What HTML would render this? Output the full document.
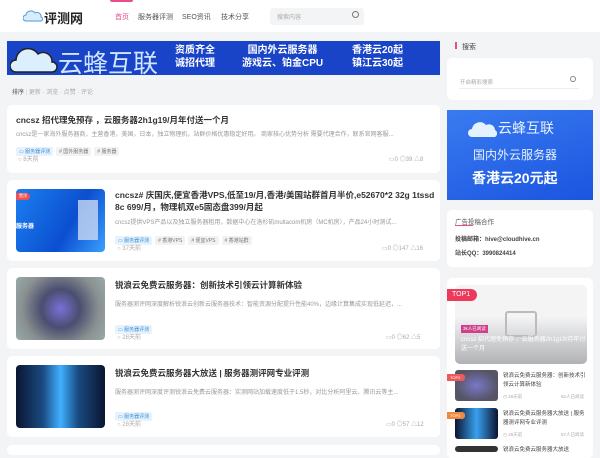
<!DOCTYPE html>
<html><head><meta charset="utf-8"><style>
*{margin:0;padding:0;box-sizing:border-box}
body{width:600px;height:450px;overflow:hidden;background:#f3f4f6;font-family:"Liberation Sans","Noto Sans CJK SC",sans-serif;color:#333;position:relative}
.a{position:absolute}
.hdr{left:0;top:0;width:600px;height:32px;background:#fff}
.card{background:#fff;border-radius:5px}
.t{font-size:8.5px;font-weight:bold;color:#333;white-space:nowrap}
.d{font-size:6px;color:#999;white-space:nowrap;overflow:hidden}
.tag{display:inline-block;font-size:5px;padding:1px 3px;background:#f2f2f2;color:#777;margin-right:3px;border-radius:2px}
.tag.b{background:#e6f2fc;color:#3a8fd6}
.m{font-size:6px;color:#aaa}
</style></head><body>
<div class="a hdr"></div>
<div class="a" style="left:110px;top:0;width:23px;height:2px;background:#e84e8a;border-radius:0 0 2px 2px"></div>
<svg class="a" style="left:23px;top:10px" width="20" height="12" viewBox="0 0 20 12"><path d="M3 11a3 3 0 0 1 0-6a5 5 0 0 1 9-2a4 4 0 0 1 6 4a2 2 0 0 1-1 4z" fill="#d8ecfa" stroke="#4a9be0" stroke-width="1"/></svg>
<div class="a" style="left:44px;top:8px;font-size:13px;font-weight:bold;color:#222">评测网</div>
<div class="a" style="left:115px;top:12px;font-size:7px;color:#e84e8a">首页</div>
<div class="a" style="left:138px;top:12px;font-size:7px;color:#555">服务器评测</div>
<div class="a" style="left:182px;top:12px;font-size:7px;color:#555">SEO资讯</div>
<div class="a" style="left:221px;top:12px;font-size:7px;color:#555">技术分享</div>
<div class="a" style="left:270px;top:8px;width:94px;height:17px;background:#f3f4f6;border-radius:3px"></div>
<div class="a" style="left:277px;top:12px;font-size:6px;color:#aaa">搜索内容</div>
<div class="a" style="left:352px;top:11px;width:7px;height:7px;border:1px solid #777;border-radius:50%"></div>

<div class="a" style="left:7px;top:41px;width:433px;height:34px;background:#1a44c8"></div>
<svg class="a" style="left:10px;top:44px" width="50" height="30" viewBox="0 0 50 30"><path d="M6 28a6 6 0 0 1 0-12a12 12 0 0 1 22-6a9 9 0 0 1 14 8a5 5 0 0 1 0 10z" fill="#dcefff" stroke="#222" stroke-width="1.5"/></svg>
<div class="a" style="left:58px;top:44px;font-size:25px;color:#cfe6ff;white-space:nowrap">云蜂互联</div>
<div class="a" style="left:175px;top:44px;font-size:10px;font-weight:bold;color:#fff;line-height:13px">资质齐全<br>诚招代理</div>
<div class="a" style="left:242px;top:44px;font-size:10px;font-weight:bold;color:#fff;line-height:13px;text-align:center">国内外云服务器<br>游戏云、铂金CPU</div>
<div class="a" style="left:352px;top:44px;font-size:10px;font-weight:bold;color:#fff;line-height:13px;text-align:right">香港云20起<br>镇江云30起</div>

<div class="a" style="left:12px;top:87px;font-size:6px;color:#555">排序 <span style="color:#ccc">|</span> <span style="color:#aaa">更新 · 浏览 · 点赞 · 评论</span></div>

<div class="a card" style="left:7px;top:105px;width:433px;height:68px"></div>
<div class="a t" style="left:16px;top:114px">cncsz 招代理免预存 ，云服务器2h1g19/月年付送一个月</div>
<div class="a d" style="left:16px;top:129px;width:415px">cncsz是一家海外服务器商，主营香港，美国，日本，独立物理机，站群价格优惠稳定好用。 商家核心优势分析 需要代理合作，联系官网客服...</div>
<div class="a" style="left:16px;top:140px"><span class="tag b">▭ 服务器评测</span><span class="tag"># 国外服务器</span><span class="tag"># 服务器</span></div>
<div class="a m" style="left:18px;top:154px">○ 8天前</div>
<div class="a m" style="left:389px;top:154px">▭0 ◎39 △8</div>

<div class="a card" style="left:7px;top:180px;width:433px;height:81px"></div>
<div class="a" style="left:16px;top:189px;width:89px;height:63px;border-radius:4px;background:linear-gradient(120deg,#1c7ff0,#0b4fd0 60%,#3aa0ff)"></div>
<div class="a" style="left:16px;top:193px;width:14px;height:7px;background:#f05050;border-radius:0 4px 4px 0;font-size:4px;color:#fff;text-align:center">置顶</div>
<div class="a" style="left:16px;top:221px;font-size:6px;font-weight:bold;color:#fff">服务器</div>
<div class="a" style="left:78px;top:200px;width:20px;height:40px;background:#c9daf2;opacity:.8"></div>
<div class="a t" style="left:115px;top:189px;line-height:12px;white-space:normal;width:320px">cncsz# 庆国庆,便宜香港VPS,低至19/月,香港/美国站群首月半价,e52670*2 32g 1tssd 8c 699/月，物理机双e5固态盘399/月起</div>
<div class="a d" style="left:115px;top:217px;width:316px">cncsz提供VPS产品以及独立服务器租用，数据中心在洛杉矶multacom机房（MC机房），产品24小时测试...</div>
<div class="a" style="left:115px;top:229px"><span class="tag b">▭ 服务器评测</span><span class="tag"># 香港VPS</span><span class="tag"># 便宜VPS</span><span class="tag"># 香港站群</span></div>
<div class="a m" style="left:117px;top:243px">○ 37天前</div>
<div class="a m" style="left:382px;top:243px">▭0 ◎147 △16</div>

<div class="a card" style="left:7px;top:268px;width:433px;height:81px"></div>
<div class="a" style="left:16px;top:277px;width:89px;height:63px;border-radius:4px;background:radial-gradient(circle at 50% 50%,#7a70d8,#4a4e70 35%,#8a9090 70%,#9aa)"></div>
<div class="a t" style="left:115px;top:279px">锐浪云免费云服务器：创新技术引领云计算新体验</div>
<div class="a d" style="left:115px;top:299px;width:316px">服务器测评网深度解析锐浪云创新云服务器技术：智能资源分配提升性能40%，边缘计算集成实现低延迟，...</div>
<div class="a" style="left:115px;top:318px"><span class="tag b">▭ 服务器评测</span></div>
<div class="a m" style="left:117px;top:332px">○ 28天前</div>
<div class="a m" style="left:386px;top:332px">▭0 ◎62 △5</div>

<div class="a card" style="left:7px;top:356px;width:433px;height:81px"></div>
<div class="a" style="left:16px;top:365px;width:89px;height:63px;border-radius:4px;background:linear-gradient(90deg,#0a1530,#1a4a80 30%,#40b0ff 50%,#1a4a80 70%,#0a1530)"></div>
<div class="a t" style="left:115px;top:367px">锐浪云免费云服务器大放送 | 服务器测评网专业评测</div>
<div class="a d" style="left:115px;top:387px;width:316px">服务器测评网深度评测锐浪云免费云服务器：实测网站加载速度低于1.5秒，对比分析阿里云、腾讯云等主...</div>
<div class="a" style="left:115px;top:405px"><span class="tag b">▭ 服务器评测</span></div>
<div class="a m" style="left:117px;top:419px">○ 28天前</div>
<div class="a m" style="left:386px;top:419px">▭0 ◎57 △12</div>
<div class="a card" style="left:7px;top:445px;width:433px;height:10px"></div>

<div class="a" style="left:455px;top:42px;width:2px;height:7px;background:#e84e8a"></div>
<div class="a" style="left:462px;top:42px;font-size:7px;color:#444">搜索</div>
<div class="a card" style="left:447px;top:58px;width:146px;height:42px"></div>
<div class="a" style="left:460px;top:78px;font-size:5.5px;color:#aaa">开启精彩搜索</div>
<div class="a" style="left:459px;top:88px;width:120px;height:1px;background:#eee"></div>
<div class="a" style="left:570px;top:76px;width:6px;height:6px;border:1px solid #888;border-radius:50%"></div>

<div class="a" style="left:447px;top:110px;width:146px;height:90px;background:linear-gradient(160deg,#3a7bf0,#1a55e0)"></div>
<svg class="a" style="left:468px;top:120px" width="30" height="18" viewBox="0 0 30 18"><path d="M4 17a4 4 0 0 1 0-8a8 8 0 0 1 14-4a6 6 0 0 1 9 5a4 4 0 0 1 0 7z" fill="#e4f2ff"/></svg>
<div class="a" style="left:498px;top:118px;font-size:14px;color:#e6f2ff">云蜂互联</div>
<div class="a" style="left:473px;top:146px;font-size:12px;color:#e6f2ff">国内外云服务器</div>
<div class="a" style="left:472px;top:168px;font-size:14px;font-weight:bold;color:#fff">香港云20元起</div>

<div class="a card" style="left:447px;top:210px;width:146px;height:57px"></div>
<div class="a" style="left:455px;top:216px;font-size:6.5px;color:#555">广告投稿合作</div>
<div class="a" style="left:455px;top:225px;width:18px;height:1px;background:#e84e8a"></div>
<div class="a" style="left:455px;top:234px;font-size:6px;font-weight:bold;color:#444">投稿邮箱：hive@cloudhive.cn</div>
<div class="a" style="left:455px;top:248px;font-size:6px;font-weight:bold;color:#444">站长QQ：3990824414</div>

<div class="a card" style="left:447px;top:278px;width:146px;height:180px"></div>
<div class="a" style="left:455px;top:285px;width:132px;height:79px;border-radius:5px;background:linear-gradient(#f4f4f5 40%,#b0b2b5)"></div>
<div class="a" style="left:505px;top:311px;width:32px;height:26px;border:2px solid #bbb;border-radius:3px"></div>
<div class="a" style="left:447px;top:289px;width:30px;height:12px;background:#ee3a5a;border-radius:0 6px 6px 0;font-size:7px;color:#fff;padding:2px 0 0 5px">TOP1</div>
<div class="a" style="left:461px;top:325px;font-size:4.5px;color:#fff;background:#d0408a;padding:1px 2px">3k人已阅读</div>
<div class="a" style="left:461px;top:336px;font-size:6px;color:#fff;line-height:9px;width:125px">cncsz 招代理免预存 ，云服务器2h1g19/月年付送一个月</div>

<div class="a" style="left:455px;top:370px;width:43px;height:31px;border-radius:3px;background:radial-gradient(#7a78c8,#556 70%)"></div>
<div class="a" style="left:447px;top:374px;width:18px;height:7px;background:#ee5a5a;font-size:4px;color:#fff;padding:1px 0 0 3px;border-radius:0 3px 3px 0">TOP2</div>
<div class="a" style="left:503px;top:372px;font-size:5.5px;color:#444;line-height:9px;width:86px">锐浪云免费云服务器：创新技术引领云计算新体验</div>
<div class="a" style="left:503px;top:394px;font-size:4.5px;color:#aaa">◷ 28天前</div>
<div class="a" style="left:561px;top:394px;font-size:4.5px;color:#aaa">82人已阅读</div>

<div class="a" style="left:455px;top:408px;width:43px;height:31px;border-radius:3px;background:linear-gradient(90deg,#0a1530,#3aa0f0 50%,#0a1530)"></div>
<div class="a" style="left:447px;top:412px;width:18px;height:7px;background:#f08a40;font-size:4px;color:#fff;padding:1px 0 0 3px;border-radius:0 3px 3px 0">TOP3</div>
<div class="a" style="left:503px;top:410px;font-size:5.5px;color:#444;line-height:9px;width:86px">锐浪云免费云服务器大放送 | 服务器测评网专业评测</div>
<div class="a" style="left:503px;top:432px;font-size:4.5px;color:#aaa">◷ 28天前</div>
<div class="a" style="left:561px;top:432px;font-size:4.5px;color:#aaa">57人已阅读</div>
<div class="a" style="left:455px;top:446px;width:43px;height:6px;background:#333;border-radius:3px"></div>
<div class="a" style="left:503px;top:445px;font-size:5.5px;color:#444">锐浪云免费云服务器大放送</div>
</body></html>
